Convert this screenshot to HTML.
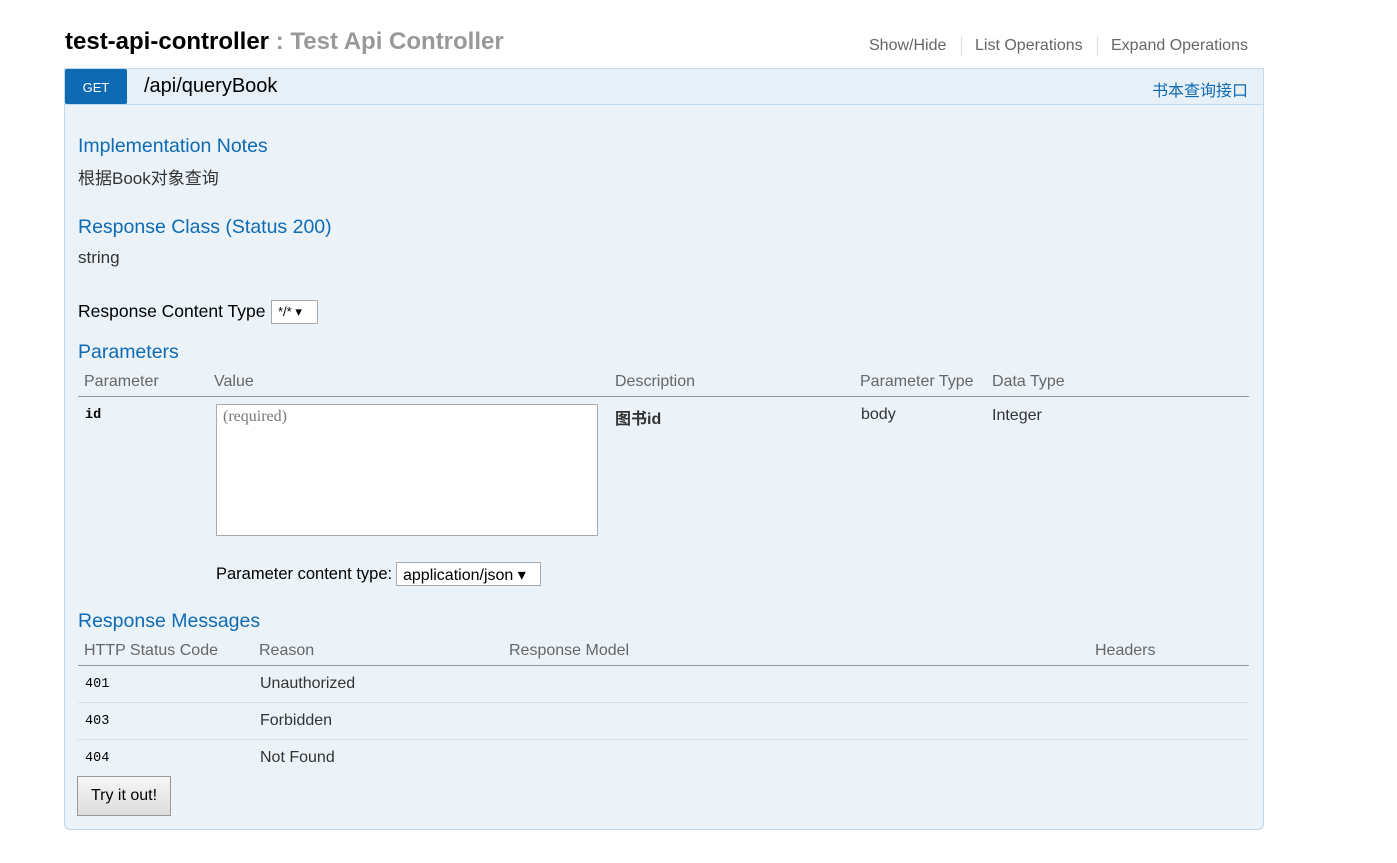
<!DOCTYPE html>
<html><head><meta charset="utf-8"><style>
*{margin:0;padding:0;box-sizing:border-box}
body{width:1397px;height:863px;background:#fff;font-family:"Liberation Sans","Noto Sans CJK SC",sans-serif;color:#333;position:relative;overflow:hidden}
.a{position:absolute;white-space:nowrap}
.h{color:#0f6ab4;font-size:19.5px}
.th{color:#666;font-size:16px}
.td{color:#333;font-size:16px}
.mono{font-family:"Liberation Mono","DejaVu Sans Mono",monospace;font-size:13.5px;color:#000}
.line{position:absolute;height:1px}
</style></head><body>
<div class="a" style="left:65px;top:28px;font-size:24px;font-weight:bold;color:#000">test-api-controller <span style="color:#999">: Test Api Controller</span></div>
<div class="a" style="left:869px;top:37px;font-size:16px;color:#666">Show/Hide</div>
<div class="a" style="left:961px;top:36px;width:1px;height:20px;background:#ddd"></div>
<div class="a" style="left:975px;top:37px;font-size:16px;color:#666">List Operations</div>
<div class="a" style="left:1097px;top:36px;width:1px;height:20px;background:#ddd"></div>
<div class="a" style="left:1111px;top:37px;font-size:16px;color:#666">Expand Operations</div>

<div class="a" style="left:64px;top:68px;width:1200px;height:762px;background:#ebf3f9;border:1px solid #c3d9ec;border-radius:0 0 6px 6px"></div>
<div class="a" style="left:64px;top:68px;width:1200px;height:37px;background:#e7f0f7;border:1px solid #c3d9ec"></div>
<div class="a" style="left:65px;top:69px;width:62px;height:35px;background:#0f6ab4;border-radius:2px;color:#fff;font-size:13px;text-align:center;line-height:37px">GET</div>
<div class="a" style="left:144px;top:75px;font-size:20px;color:#000">/api/queryBook</div>
<div class="a" style="left:1152px;top:77px;font-size:16px;color:#0f6ab4">书本查询接口</div>

<div class="a h" style="left:78px;top:135px">Implementation Notes</div>
<div class="a td" style="left:78px;top:164px;font-size:17px">根据Book对象查询</div>
<div class="a h" style="left:78px;top:216px">Response Class (Status 200)</div>
<div class="a td" style="left:78px;top:248px;font-size:17px">string</div>
<div class="a" style="left:78px;top:301px;font-size:17.5px;color:#000">Response Content Type</div>
<div class="a" style="left:271px;top:300px;width:47px;height:24px;background:#fff;border:1px solid #aaa;font-size:13px;color:#000;padding:3px 0 0 6px">*/* ▾</div>
<div class="a h" style="left:78px;top:341px">Parameters</div>
<div class="a th" style="left:84px;top:373px">Parameter</div>
<div class="a th" style="left:214px;top:373px">Value</div>
<div class="a th" style="left:615px;top:373px">Description</div>
<div class="a th" style="left:860px;top:373px">Parameter Type</div>
<div class="a th" style="left:992px;top:373px">Data Type</div>
<div class="line" style="left:78px;top:396px;width:1171px;background:#999"></div>
<div class="a mono" style="left:85px;top:408px;font-weight:bold">id</div>
<div class="a" style="left:216px;top:404px;width:382px;height:132px;background:#fff;border:1px solid #aaa;font-family:'Liberation Serif',serif;font-size:16px;color:#777;padding:3px 6px">(required)</div>
<div class="a td" style="left:615px;top:405px;font-weight:bold;color:#333">图书id</div>
<div class="a td" style="left:861px;top:406px">body</div>
<div class="a td" style="left:992px;top:407px">Integer</div>
<div class="a" style="left:216px;top:565px;font-size:16.5px;color:#000">Parameter content type:</div>
<div class="a" style="left:396px;top:562px;width:145px;height:24px;background:#fff;border:1px solid #aaa;font-size:16px;color:#000;padding:2px 0 0 6px">application/json ▾</div>
<div class="a h" style="left:78px;top:610px">Response Messages</div>
<div class="a th" style="left:84px;top:642px">HTTP Status Code</div>
<div class="a th" style="left:259px;top:642px">Reason</div>
<div class="a th" style="left:509px;top:642px">Response Model</div>
<div class="a th" style="left:1095px;top:642px">Headers</div>
<div class="line" style="left:78px;top:665px;width:1171px;background:#999"></div>
<div class="a mono" style="left:85px;top:677px">401</div>
<div class="a td" style="left:260px;top:675px">Unauthorized</div>
<div class="line" style="left:78px;top:702px;width:1171px;background:#ddd"></div>
<div class="a mono" style="left:85px;top:714px">403</div>
<div class="a td" style="left:260px;top:712px">Forbidden</div>
<div class="line" style="left:78px;top:739px;width:1171px;background:#ddd"></div>
<div class="a mono" style="left:85px;top:751px">404</div>
<div class="a td" style="left:260px;top:749px">Not Found</div>
<div class="a" style="left:77px;top:776px;width:94px;height:40px;background:linear-gradient(#f6f6f6,#dcdcdc);border:1px solid #999;font-size:16px;color:#000;text-align:center;line-height:38px">Try it out!</div>
</body></html>
